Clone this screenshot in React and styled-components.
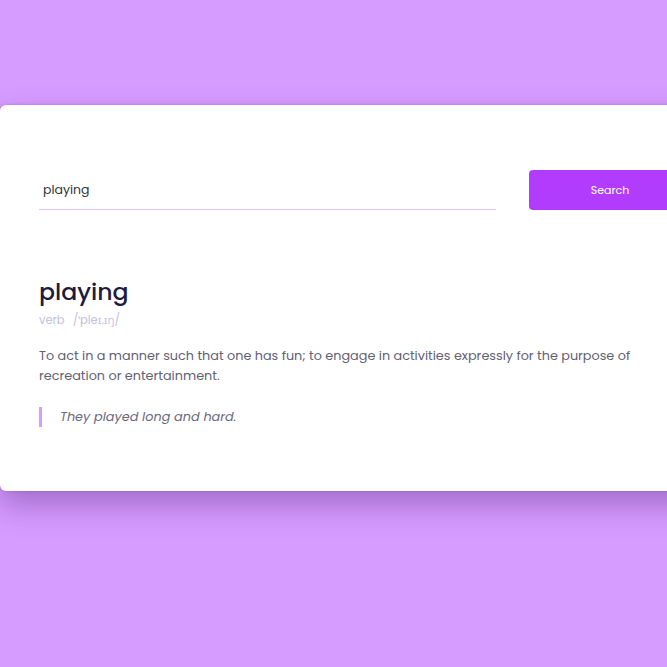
import React from "react";
import styled, { createGlobalStyle } from "styled-components";

const Global = createGlobalStyle`
  html, body { margin: 0; padding: 0; }
  body {
    background: #d69cff;
    font-family: "Poppins", "Open Sans", "Noto Sans", sans-serif;
    overflow: hidden;
    min-height: 667px;
  }
`;

const Page = styled.div`
  padding-top: 105px;
  min-height: 667px;
  box-sizing: border-box;
`;

const Card = styled.div`
  width: 730px;
  box-sizing: border-box;
  background: #fff;
  border-radius: 6px;
  padding: 65px 39px 64px 39px;
  box-shadow: 0 14px 30px rgba(70, 20, 110, 0.35), 0 0 3px rgba(70, 20, 110, 0.2);
`;

const SearchRow = styled.div`
  display: flex;
  align-items: stretch;
  gap: 33px;
  height: 40px;
`;

const Input = styled.input`
  width: 457px;
  box-sizing: border-box;
  border: none;
  border-bottom: 1px solid #e0c2fc;
  outline: none;
  padding: 0 4px;
  font-family: inherit;
  font-size: 12.5px;
  color: #333;
  background: transparent;
`;

const Button = styled.button`
  width: 162px;
  border: none;
  border-radius: 4px;
  background: #b23cfd;
  color: #fff;
  font-family: inherit;
  font-size: 11px;
  cursor: pointer;
`;

const Result = styled.div`
  margin-top: 64px;
`;

const Word = styled.h1`
  margin: 0;
  font-size: 23.6px;
  font-weight: 500;
  color: #1d1b3f;
  line-height: 36px;
`;

const Meta = styled.div`
  display: flex;
  gap: 8px;
  font-size: 11.5px;
  color: #c3c1e0;
  margin-top: 2px;
`;

const Definition = styled.p`
  margin: 17px 0 0;
  font-size: 12.8px;
  line-height: 20px;
  color: #636175;
  max-width: 615px;
`;

const Example = styled.blockquote`
  margin: 21px 0 0;
  padding-left: 18px;
  border-left: 3px solid #d69cff;
  font-style: italic;
  font-size: 12.8px;
  line-height: 20px;
  color: #6b6880;
`;

export default function App() {
  return (
    <>
      <Global />
      <Page>
        <Card>
          <SearchRow>
            <Input defaultValue="playing" />
            <Button>Search</Button>
          </SearchRow>
          <Result>
            <Word>playing</Word>
            <Meta>
              <span>verb</span>
              <span>/ˈpleɪ.ɪŋ/</span>
            </Meta>
            <Definition>
              To act in a manner such that one has fun; to engage in activities expressly for the purpose of recreation or entertainment.
            </Definition>
            <Example>They played long and hard.</Example>
          </Result>
        </Card>
      </Page>
    </>
  );
}
